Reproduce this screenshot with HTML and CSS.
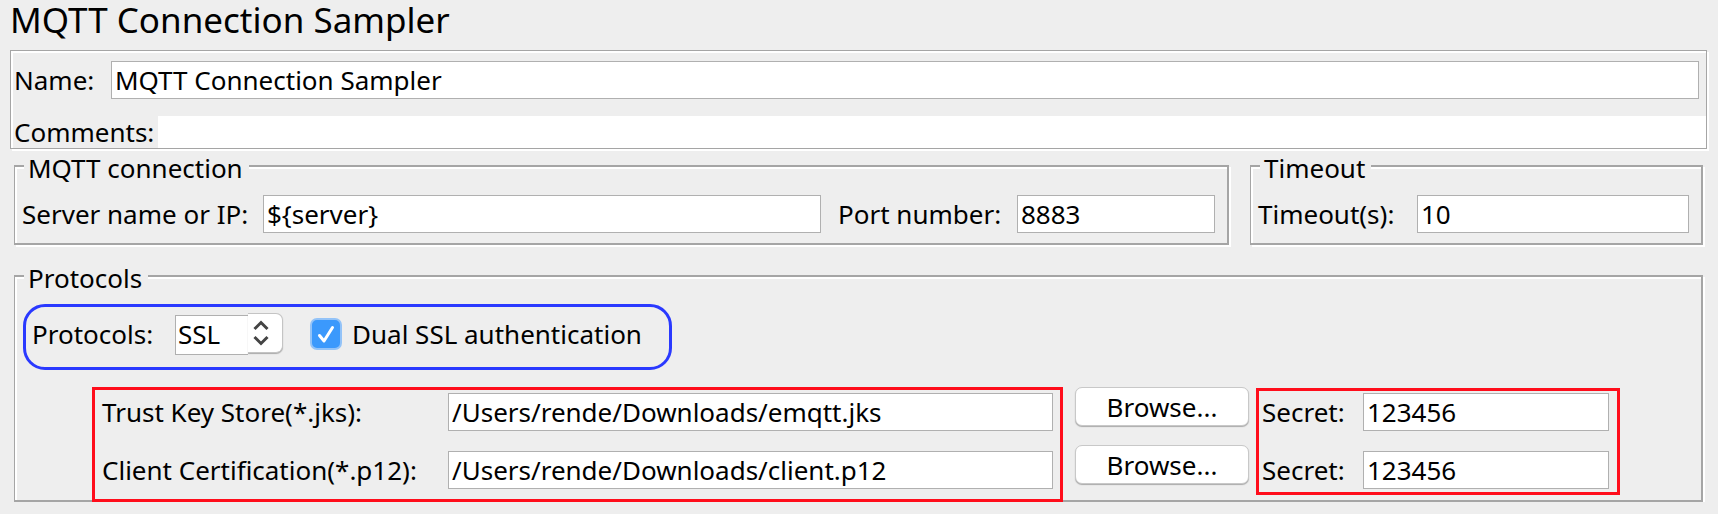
FILE: index.html
```html
<!DOCTYPE html>
<html lang="en">
<head>
<meta charset="utf-8">
<title>MQTT Connection Sampler</title>
<link rel="stylesheet" href="styles.css">
</head>
<body>
<main class="sampler">
  <h1 class="title">MQTT Connection Sampler</h1>

  <section class="identity">
    <div class="name-row">
      <label class="name-label" for="name">Name:</label>
      <input class="field grow" id="name" type="text" value="MQTT Connection Sampler">
    </div>
    <div class="comments-row">
      <label class="comments-label" for="comments">Comments:</label>
      <input class="comments-field grow" id="comments" type="text">
    </div>
  </section>

  <div class="connection">
    <fieldset class="group group-mqtt">
      <legend class="legend">MQTT connection</legend>
      <div class="frame frame-row">
        <label class="server-label" for="server">Server name or IP:</label>
        <input class="field server-field" id="server" type="text" value="${server}">
        <label class="port-label" for="port">Port number:</label>
        <input class="field port-field" id="port" type="text" value="8883">
      </div>
    </fieldset>
    <fieldset class="group group-timeout">
      <legend class="legend">Timeout</legend>
      <div class="frame frame-row">
        <label class="timeout-label" for="timeout">Timeout(s):</label>
        <input class="field grow" id="timeout" type="text" value="10">
      </div>
    </fieldset>
  </div>

  <fieldset class="group group-protocols">
    <legend class="legend">Protocols</legend>
    <div class="frame frame-protocols">
      <div class="protocol-box">
        <label class="protocol-label" for="protocol">Protocols:</label>
        <div class="combo">
          <span class="combo-text"></span>
          <span class="combo-arrows">
            <svg width="16" height="26" viewBox="0 0 16 26" fill="none" stroke="#444" stroke-width="3">
              <path d="M1.5 9 8 2.500 14.500 9M1.500 17 8 23.500 14.500 17"/>
            </svg>
          </span>
          <select class="combo-select" id="protocol"><option>SSL</option><option>TCP</option></select>
        </div>
        <label class="check-label">
          <span class="check">
            <input class="check-input" type="checkbox" checked>
            <svg class="check-mark" width="32" height="32" viewBox="0 0 32 32" fill="none" stroke="#fff" stroke-width="3" stroke-linecap="round" stroke-linejoin="round">
              <path d="M9.500 17.500 14 23 22.500 9.500"/>
            </svg>
          </span>
          Dual SSL authentication
        </label>
      </div>

      <div class="files">
        <div class="marked marked-files">
          <div class="file-row">
            <label class="file-label" for="trust">Trust Key Store(*.jks):</label>
            <input class="field grow" id="trust" type="text" value="/Users/rende/Downloads/emqtt.jks">
          </div>
          <div class="file-row">
            <label class="file-label" for="client">Client Certification(*.p12):</label>
            <input class="field grow" id="client" type="text" value="/Users/rende/Downloads/client.p12">
          </div>
        </div>
        <div class="browse-column">
          <button class="browse" type="button">Browse...</button>
          <button class="browse" type="button">Browse...</button>
        </div>
        <div class="marked marked-secrets">
          <div class="file-row">
            <label class="secret-label" for="secret1">Secret:</label>
            <input class="field grow" id="secret1" type="text" value="123456">
          </div>
          <div class="file-row">
            <label class="secret-label" for="secret2">Secret:</label>
            <input class="field grow" id="secret2" type="text" value="123456">
          </div>
        </div>
      </div>
    </div>
  </fieldset>
</main>
</body>
</html>
```

FILE: styles.css
```css
* {
  box-sizing: border-box;
}

body {
  margin: 0;
  background: #eee;
  color: #000;
  font-family: "Noto Sans", sans-serif;
  font-size: 26px;
  line-height: 36px;
}

input,
select,
button {
  margin: 0;
  color: inherit;
  font: inherit;
}

label {
  flex: none;
  white-space: nowrap;
}

.sampler {
  padding: 0 10px;
}

.title {
  margin: 0;
  height: 50px;
  font-size: 35px;
  font-weight: 400;
  line-height: 40px;
}

.grow {
  flex: 1;
  min-width: 0;
}

.field {
  height: 38px;
  min-width: 0;
  padding: 0 3px;
  border: 1px solid #b0b0b0;
  border-radius: 0;
  background: #fff;
}

/* Name and comments */
.identity {
  margin-right: 1px;
  border: 1px solid #a5a5a5;
  box-shadow: 2px 2px 0 #fff, inset 2px 2px 0 #fff;
}

.name-row {
  display: flex;
  align-items: center;
  padding: 10px 7px 17px 3px;
}

.name-label {
  width: 97px;
}

.comments-row {
  display: flex;
  height: 32px;
  padding-left: 3px;
}

.comments-label {
  width: 144px;
  line-height: 32px;
}

.comments-field {
  padding: 0 3px;
  border: 0;
  background: #fff;
}

/* Etched group boxes */
.group {
  min-width: 0;
  margin: 0;
  padding: 0;
  border: 0;
}

.legend {
  position: relative;
  z-index: 1;
  height: 30px;
  margin-left: 10px;
  padding: 0 6px 0 4px;
  background: #eee;
  line-height: 30px;
}

.frame {
  margin-top: -18px;
  border: 2px solid #a5a5a5;
  border-left-width: 1px;
  box-shadow: 2px 2px 0 #fff, inset 2px 2px 0 #fff;
}

.frame-row {
  display: flex;
  align-items: center;
  padding: 28px 12px 10px 7px;
}

.connection {
  display: flex;
  gap: 21px;
  margin: 4px 5px 0 4px;
}

.group-mqtt {
  flex: 1215;
}

.group-timeout {
  flex: 453;
}

.group-protocols {
  margin: 18px 5px 0 4px;
}

.server-label {
  width: 241px;
}

.server-field {
  flex: 550;
}

.port-label {
  width: 196px;
  padding-left: 17px;
}

.port-field {
  flex: 190;
}

.timeout-label {
  width: 159px;
}

/* Protocol selection */
.frame-protocols {
  padding: 27px 0 0 8px;
}

.protocol-box {
  display: flex;
  align-items: center;
  width: max-content;
  height: 66px;
  padding: 0 27px 6px 6px;
  border: 3px solid #2a39ff;
  border-radius: 22px;
}

.protocol-label {
  width: 143px;
}

.combo {
  position: relative;
  display: flex;
  width: 108px;
  height: 42px;
}

.combo-text {
  align-self: flex-end;
  width: 73px;
  height: 40px;
  border: 1px solid #b0b0b0;
  border-right: 0;
  background: #fff;
}

.combo-arrows {
  display: flex;
  align-items: center;
  justify-content: center;
  width: 35px;
  height: 40px;
  padding-right: 8px;
  border: 1px solid #c4c4c4;
  border-left: 0;
  border-radius: 0 7px 7px 0;
  background: #fff;
  box-shadow: 0 1px 1px #aaa;
}

.combo-select {
  position: absolute;
  inset: 0;
  width: 100%;
  padding: 0 3px;
  border: 0;
  background: transparent;
  appearance: none;
}

.check-label {
  display: flex;
  align-items: center;
  gap: 10px;
  margin-left: 27px;
}

.check {
  display: grid;
}

.check-input {
  grid-area: 1 / 1;
  width: 32px;
  height: 32px;
  border: 2px solid #93c3f8;
  border-radius: 7px;
  background: #3b99fc;
  appearance: none;
}

.check-mark {
  grid-area: 1 / 1;
  pointer-events: none;
}

/* Key files */
.files {
  display: flex;
  align-items: flex-start;
  margin: 17px 81px -2px 69px;
}

.marked {
  display: grid;
  grid-template-columns: minmax(0, 1fr);
  row-gap: 20px;
  border: 3px solid #ff0d1b;
}

.marked-files {
  position: relative;
  flex: 1;
  min-width: 0;
  padding: 3px 7px 10px 7px;
}

.marked-secrets {
  flex: none;
  width: 364px;
  margin: 1px 0 0 7px;
  padding: 2px 8px 3px 3px;
}

.file-row {
  display: flex;
  align-items: center;
}

.file-label {
  width: 346px;
}

.secret-label {
  width: 101px;
}

.browse-column {
  display: grid;
  row-gap: 19px;
  margin-left: 12px;
}

.browse {
  width: 174px;
  height: 39px;
  padding: 0;
  border: 1px solid #c8c8c8;
  border-radius: 7px;
  background: #fff;
  box-shadow: 0 1px 1px #aaa;
}
```
